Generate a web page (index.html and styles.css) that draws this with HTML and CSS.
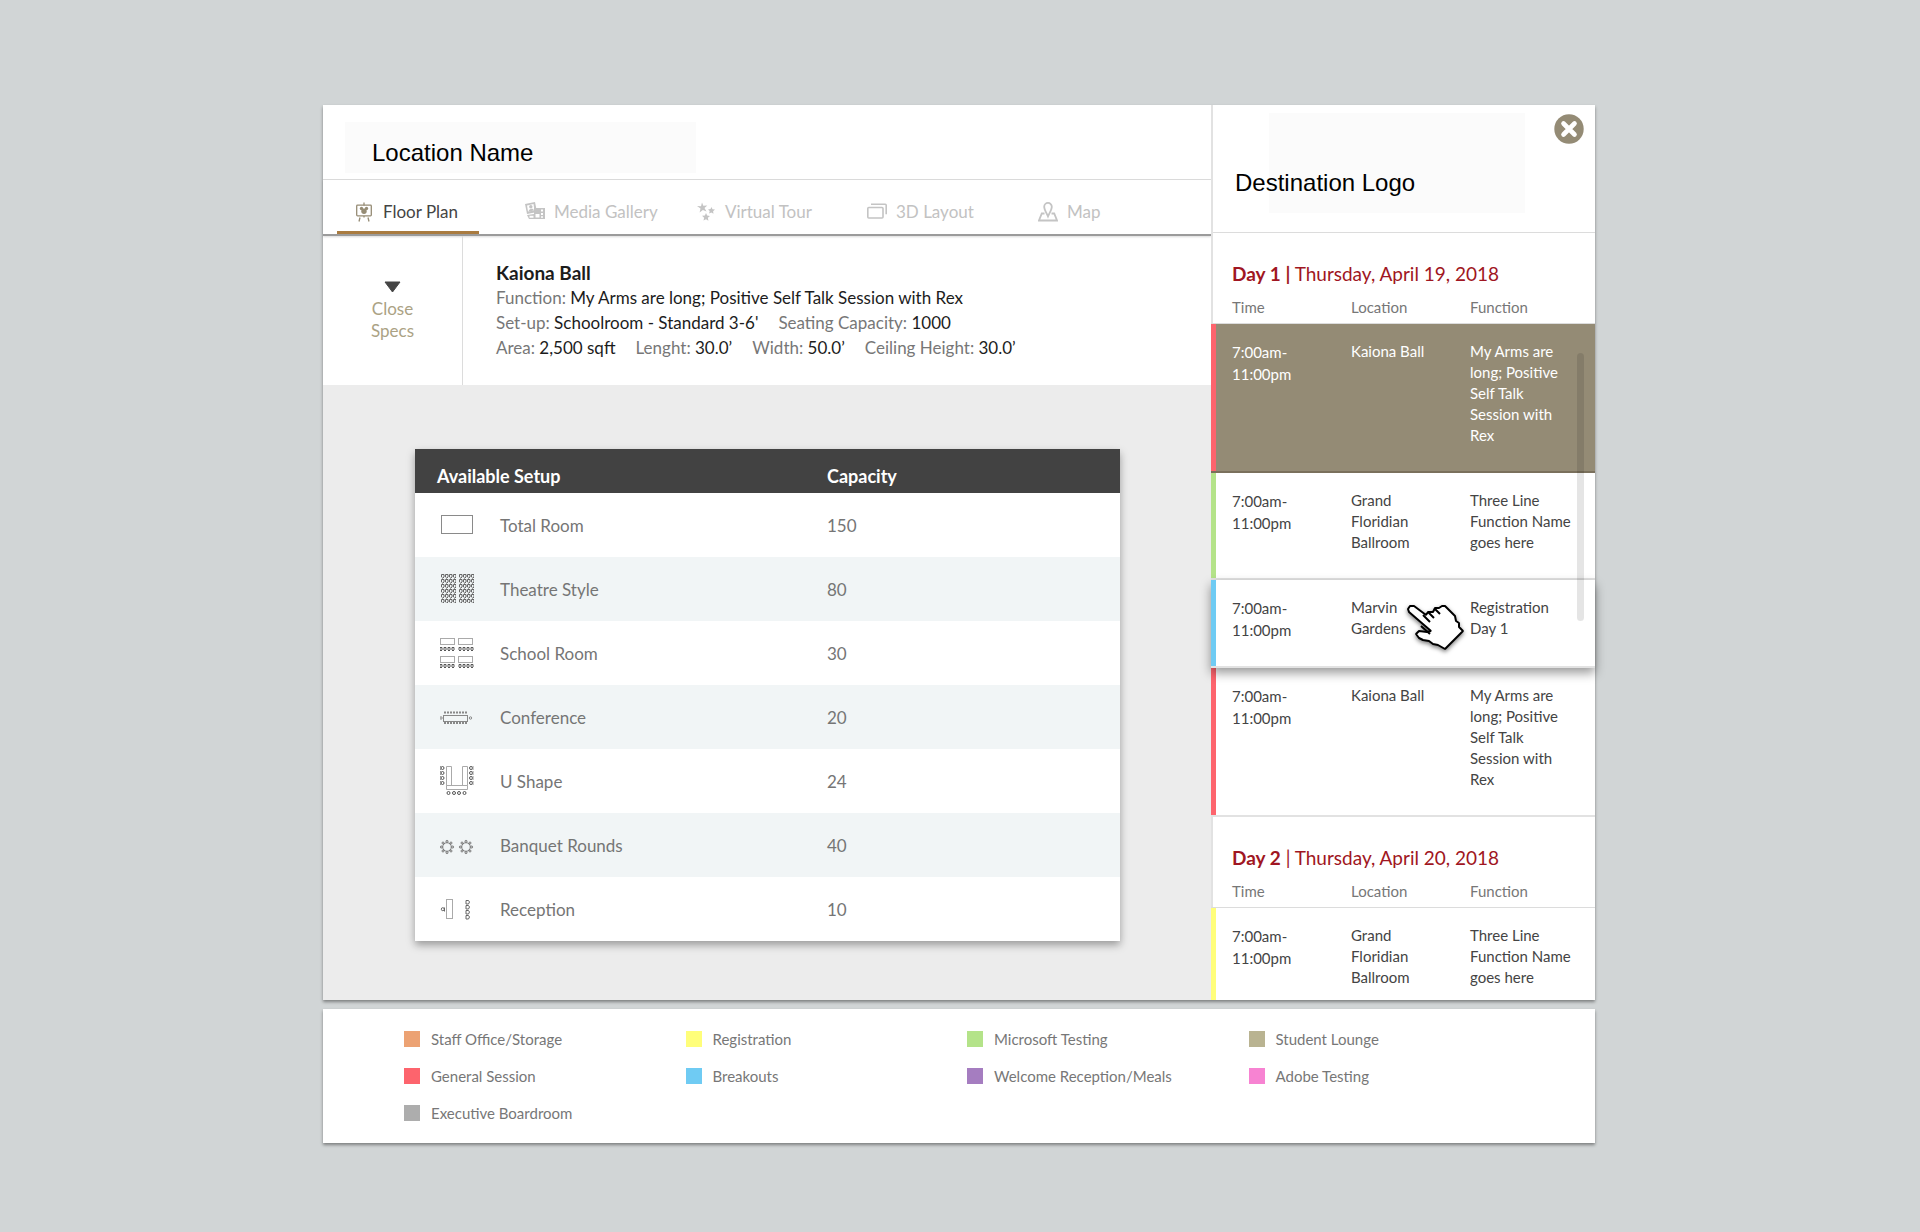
FILE: index.html
```html
<!DOCTYPE html>
<html lang="en">
<head>
  <meta charset="UTF-8">
  <meta name="viewport" content="width=device-width, initial-scale=1.0">
  <title>Floor Plan</title>
  <link rel="stylesheet" href="styles.css">
</head>
<body>
  <!-- shared seat shapes -->
  <svg class="defs" aria-hidden="true">
    <defs>
      <pattern id="seats" width="4" height="5" patternUnits="userSpaceOnUse">
        <path d="M0.500 0.500h2.500v2.500l-1.200 1.200-1.300-1.200z" fill="none" stroke="#666"/>
        <path d="M3 2h1M1.500 4v1" stroke="#999"/>
      </pattern>
      <g id="seat-row" fill="none" stroke="#555" stroke-width="1">
        <path d="M1 0.5h2v2.5l-1 1-1-1zM5 0.5h2v2.5l-1 1-1-1zM9 0.5h2v2.5l-1 1-1-1zM13 0.5h2v2.5l-1 1-1-1z"/>
      </g>
      <g id="round-seats" fill="none" stroke="#777" stroke-width="1">
        <circle cx="7" cy="7" r="4.300"/>
        <circle cx="7" cy="1.300" r="1"/><circle cx="7" cy="12.700" r="1"/>
        <circle cx="1.300" cy="7" r="1"/><circle cx="12.700" cy="7" r="1"/>
        <circle cx="3" cy="3" r="1"/><circle cx="11" cy="3" r="1"/>
        <circle cx="3" cy="11" r="1"/><circle cx="11" cy="11" r="1"/>
      </g>
    </defs>
  </svg>

  <div class="app">
    <main class="main">
      <header class="location">
        <h1 class="location-name">Location Name</h1>
      </header>

      <!-- tabs -->
      <nav class="tabs">
        <a class="tab active" href="#floor-plan">
          <svg width="20" height="20" viewBox="0 0 20 20" fill="none" stroke="#968c75" stroke-width="1.3">
            <rect x="2.7" y="3.2" width="14.6" height="10.6" rx="0.8"/>
            <path d="M10 0.5v3M6 15.5l-1 4M14 15.5l1 4M10 14v1.500"/>
            <g fill="#968c75" stroke="none"><circle cx="10" cy="9.300" r="2.700"/><circle cx="7.500" cy="6.500" r="1.700"/><circle cx="12.500" cy="6.500" r="1.700"/></g>
          </svg>
          Floor Plan
        </a>
        <a class="tab" href="#media">
          <svg width="20" height="20" viewBox="0 0 20 20">
            <path fill="#c4c4c4" fill-rule="evenodd" d="M0 2l10-2 2 10-10 2zM2 3.500l1 6 6.500-1-1-6.500z"/>
            <circle cx="5.800" cy="4.800" r="1.700" fill="#c4c4c4"/><path fill="#c4c4c4" d="M3.500 9.500c0-3 5-4 5.500-1z"/>
            <path fill="#c4c4c4" fill-rule="evenodd" d="M2 13l7-1V6h11v11H4zM4.500 13.800v2h4v-2zM10.500 12v3.500h4V12zM16 7.500v2h2v-2zM16 11v2h2v-2zM16 14.300v1.500h2v-1.500z"/>
          </svg>
          Media Gallery
        </a>
        <a class="tab" href="#tour">
          <svg width="20" height="20" viewBox="0 0 20 20" fill="#c4c4c4">
            <path d="M6 0.500l1.300 3.300 4-.3-2.800 2.500 2 3.500-3.600-1.500-3.300 2.400.9-3.900L1 4l4 .2z"/>
            <path d="M15.500 5l1 2.200 2.500.3-1.900 1.700.4 2.500-2.200-1.300-2.200 1.100.6-2.400-1.700-1.700 2.500-.3z"/>
            <path d="M10 11l1.200 2.600 2.800.3-2.100 1.900.5 2.900-2.400-1.500-2.500 1.400.6-2.800-2.100-2 2.900-.3z"/>
          </svg>
          Virtual Tour
        </a>
        <a class="tab" href="#layout">
          <svg width="20" height="20" viewBox="0 0 20 20" fill="none" stroke="#c4c4c4" stroke-width="1.6">
            <rect x="0.800" y="5.500" width="15.200" height="10.500" rx="1"/><path d="M4 2.300h14.200q1 0 1 1v9"/>
          </svg>
          3D Layout
        </a>
        <a class="tab" href="#map">
          <svg width="20" height="20" viewBox="0 0 20 20" fill="none" stroke="#c4c4c4" stroke-width="1.8">
            <path d="M10 14.500C8.500 11 6.200 7.500 6.200 4.700a3.800 3.800 0 0 1 7.600 0C13.800 7.500 11.500 11 10 14.500z"/>
            <path d="M6.500 11.500H3.800L1 18.500h18l-2.800-7h-2.700"/>
          </svg>
          Map
        </a>
      </nav>

      <!-- room specs -->
      <section class="specs">
        <button class="close-specs" type="button">
          <svg width="17" height="12" viewBox="0 0 17 12"><path d="M1 1h15L8.500 11z" fill="#444" stroke="#444" stroke-linejoin="round"/></svg>
          <span>Close<br>Specs</span>
        </button>
        <div class="spec-info">
          <h2>Kaiona Ball</h2>
          <p><span>Function: <b>My Arms are long; Positive Self Talk Session with Rex</b></span></p>
          <p><span>Set-up: <b>Schoolroom - Standard 3-6'</b></span><span>Seating Capacity: <b>1000</b></span></p>
          <p><span>Area: <b>2,500 sqft</b></span><span>Lenght: <b>30.0’</b></span><span>Width: <b>50.0’</b></span><span>Ceiling Height: <b>30.0’</b></span></p>
        </div>
      </section>

      <section class="plan">
        <table class="setup">
          <thead>
            <tr><th colspan="2" scope="col">Available Setup</th><th scope="col">Capacity</th></tr>
          </thead>
          <tbody>
            <tr>
              <td class="icon"><svg width="34" height="32" viewBox="0 0 34 32"><rect x="1.500" y="6.500" width="31" height="18" fill="none" stroke="#8a8a8a"/></svg></td>
              <td>Total Room</td><td>150</td>
            </tr>
            <tr>
              <td class="icon"><svg width="34" height="32" viewBox="0 0 34 32"><svg x="1" y="1" width="15" height="29"><rect width="15" height="29" fill="url(#seats)"/></svg><svg x="19" y="1" width="15" height="29"><rect width="15" height="29" fill="url(#seats)"/></svg></svg></td>
              <td>Theatre Style</td><td>80</td>
            </tr>
            <tr>
              <td class="icon"><svg width="34" height="32" viewBox="0 0 34 32">
                <g fill="none" stroke="#aaa"><rect x="0.500" y="1.500" width="14" height="6"/><rect x="18.500" y="1.500" width="14" height="6"/><rect x="0.500" y="19.500" width="14" height="6"/><rect x="18.500" y="19.500" width="14" height="6"/></g>
                <use href="#seat-row" x="-1" y="10"/><use href="#seat-row" x="18" y="10"/><use href="#seat-row" x="-1" y="27"/><use href="#seat-row" x="18" y="27"/>
              </svg></td>
              <td>School Room</td><td>30</td>
            </tr>
            <tr>
              <td class="icon"><svg width="34" height="32" viewBox="0 0 34 32" fill="none" stroke="#888">
                <rect x="3.500" y="14.500" width="24" height="6"/>
                <path d="M4 11.500h24M4 22h24" stroke-width="2" stroke-dasharray="2 1"/>
                <circle cx="1" cy="17" r="1.200"/><circle cx="30.500" cy="17" r="1.200"/>
              </svg></td>
              <td>Conference</td><td>20</td>
            </tr>
            <tr>
              <td class="icon"><svg width="34" height="32" viewBox="0 0 34 32" fill="none">
                <path stroke="#aaa" d="M6.500 1.500h5v19h-5zM22.500 1.500h5v19h-5zM6.500 20.500h21v4h-21z"/>
                <g stroke="#555"><circle cx="2.500" cy="3" r="1.500"/><circle cx="2.500" cy="8" r="1.500"/><circle cx="2.500" cy="13" r="1.500"/><circle cx="2.500" cy="18" r="1.500"/>
                <circle cx="31" cy="3" r="1.500"/><circle cx="31" cy="8" r="1.500"/><circle cx="31" cy="13" r="1.500"/><circle cx="31" cy="18" r="1.500"/>
                <circle cx="8.500" cy="28" r="1.500"/><circle cx="14" cy="28" r="1.500"/><circle cx="19" cy="28" r="1.500"/><circle cx="24.500" cy="28" r="1.500"/>
                <path d="M0.500 1v4M0.500 6v4M0.500 11v4M0.500 16v4M33 1v4M33 6v4M33 11v4M33 16v4" stroke="#999"/></g>
              </svg></td>
              <td>U Shape</td><td>24</td>
            </tr>
            <tr>
              <td class="icon"><svg width="34" height="32" viewBox="0 0 34 32"><use href="#round-seats" x="0" y="11"/><use href="#round-seats" x="19" y="11"/></svg></td>
              <td>Banquet Rounds</td><td>40</td>
            </tr>
            <tr>
              <td class="icon"><svg width="34" height="32" viewBox="0 0 34 32" fill="none">
                <rect x="6.500" y="6.500" width="6" height="19" stroke="#aaa"/>
                <g stroke="#666"><path d="M4.500 14.500v4"/><circle cx="2.800" cy="16.200" r="1.500"/>
                <path d="M26 7.500h2.500l1 1.500-1 2H26zM26 12.500h2.500l1 1.500-1 2H26zM26 17.500h2.500l1 1.500-1 2H26zM26 22.500h2.500l1 1.500-1 2H26z"/></g>
              </svg></td>
              <td>Reception</td><td>10</td>
            </tr>
          </tbody>
        </table>
      </section>
    </main>

    <!-- schedule -->
    <aside class="schedule">
      <header class="destination">
        <div class="logo">Destination Logo</div>
        <button class="close" type="button" aria-label="Close">
          <svg width="30" height="30" viewBox="0 0 30 30"><circle cx="15" cy="15" r="14.700" fill="#948b75"/><path d="M9.500 9.500l11 11M20.500 9.500l-11 11" stroke="#fff" stroke-width="4.600" stroke-linecap="round"/></svg>
        </button>
      </header>

      <div class="days">
        <h3><b>Day 1 |</b> Thursday, April 19, 2018</h3>
        <table class="day">
          <thead>
            <tr><th scope="col">Time</th><th scope="col">Location</th><th scope="col">Function</th></tr>
          </thead>
          <tbody>
            <tr class="general selected">
              <td>7:00am-<br>11:00pm</td><td>Kaiona Ball</td><td>My Arms are long; Positive Self Talk Session with Rex</td>
            </tr>
            <tr class="testing">
              <td>7:00am-<br>11:00pm</td><td>Grand Floridian Ballroom</td><td>Three Line Function Name goes here</td>
            </tr>
            <tr class="breakout raised">
              <td>7:00am-<br>11:00pm</td>
              <td>Marvin Gardens
                <svg class="cursor" width="60" height="50" viewBox="0 0 60 50">
                  <path d="M2 5l2-3h4l12 9 2-3h5l2-4h4l3-2h3l10 10 1 5 3 2v4l4 4-18 18-7-4-5-1-4-3-6-1-4-2-3-4 3-3 8 1 4-1L3 8z" fill="#fff" stroke="#000" stroke-width="2" stroke-linejoin="bevel"/>
                  <path d="M17 11l7 7M22 8l6 6M29 5l5 5M15 22l9 8" fill="none" stroke="#000" stroke-width="2"/>
                </svg>
              </td>
              <td>Registration Day 1</td>
            </tr>
            <tr class="general">
              <td>7:00am-<br>11:00pm</td><td>Kaiona Ball</td><td>My Arms are long; Positive Self Talk Session with Rex</td>
            </tr>
          </tbody>
        </table>

        <h3><b>Day 2</b> | Thursday, April 20, 2018</h3>
        <table class="day">
          <thead>
            <tr><th scope="col">Time</th><th scope="col">Location</th><th scope="col">Function</th></tr>
          </thead>
          <tbody>
            <tr class="registration">
              <td>7:00am-<br>11:00pm</td><td>Grand Floridian Ballroom</td><td>Three Line Function Name goes here</td>
            </tr>
          </tbody>
        </table>
        <div class="scroll-thumb"></div>
      </div>
    </aside>
  </div>

  <!-- legend -->
  <ul class="legend">
    <li class="staff">Staff Office/Storage</li>
    <li class="registration">Registration</li>
    <li class="testing">Microsoft Testing</li>
    <li class="lounge">Student Lounge</li>
    <li class="general">General Session</li>
    <li class="breakout">Breakouts</li>
    <li class="welcome">Welcome Reception/Meals</li>
    <li class="adobe">Adobe Testing</li>
    <li class="board">Executive Boardroom</li>
  </ul>
</body>
</html>
```
FILE: styles.css
```css
* {
  box-sizing: border-box;
}

body {
  margin: 0;
  padding: 105px 26px 86px 24px;
  background-color: #d1d5d6;
  color: #444;
  font-family: Lato, sans-serif;
  font-size: 16px;
}

h1, h2, h3, p, ul {
  margin: 0;
  padding: 0;
}

button {
  border: none;
  background: none;
  padding: 0;
  font: inherit;
  cursor: pointer;
}

.defs {
  position: absolute;
  width: 0;
  height: 0;
}

/* event colours */
.staff { --bar: #eca273; }
.registration { --bar: #fffe7a; }
.testing { --bar: #b4e389; }
.lounge { --bar: #b9b391; }
.general { --bar: #fd646d; }
.breakout { --bar: #6fcbf3; }
.welcome { --bar: #a57dc0; }
.adobe { --bar: #f783d2; }
.board { --bar: #adadad; }

.app,
.legend {
  max-width: 1272px;
  margin: 0 auto;
  background-color: #fff;
  box-shadow: 0 2px 3px rgba(0, 0, 0, 0.4);
}

.app {
  display: grid;
  grid-template-columns: 1fr 384px;
}

/* left side */
.main {
  display: flex;
  flex-direction: column;
}

.location {
  padding: 17px 22px 6px;
  border-bottom: 1px solid #dcdcdc;
}

.location-name {
  max-width: 351px;
  padding: 17px 27px 6px;
  background-color: #fbfbfb;
  color: #000;
  font-family: "Liberation Sans", Arial, sans-serif;
  font-size: 24px;
  font-weight: normal;
  line-height: 28px;
}

.tabs {
  display: flex;
  gap: 29px;
  padding: 0 14px;
  border-bottom: 2px solid #9b9b9b;
  box-shadow: 0 1px 2px rgba(0, 0, 0, 0.15);
}

.tab {
  display: flex;
  align-items: center;
  gap: 9px;
  width: 142px;
  height: 54px;
  padding: 12px 0 0 17px;
  border-bottom: 3px solid transparent;
  color: #c2c2c2;
  font-size: 17px;
  text-decoration: none;
  white-space: nowrap;
}

.tab svg {
  flex-shrink: 0;
}

.tab.active {
  border-color: #a97b40;
  color: #444;
}

.specs {
  display: flex;
}

.close-specs {
  display: flex;
  flex-direction: column;
  align-items: center;
  width: 140px;
  padding: 45px 0 43px;
  border-right: 1px solid #dcdcdc;
  color: #aba284;
  font-size: 17px;
  line-height: 22px;
}

.close-specs span {
  margin-top: 5px;
}

.spec-info {
  padding: 25px 33px;
  color: #777;
  font-size: 17px;
  line-height: 25px;
}

.spec-info h2 {
  color: #1c1c1c;
  font-size: 19px;
  line-height: 24px;
}

.spec-info p {
  display: flex;
  flex-wrap: wrap;
  column-gap: 20px;
}

.spec-info b {
  color: #1c1c1c;
  font-weight: normal;
}

.plan {
  flex: 1;
  padding: 64px 91px 56px 92px;
  background-color: #ececec;
}

.setup {
  width: 100%;
  border-collapse: collapse;
  background-color: #fff;
  box-shadow: 0 4px 8px rgba(0, 0, 0, 0.35);
  color: #757575;
  font-size: 17px;
}

.setup th {
  height: 44px;
  padding: 10px 0 0;
  background-color: #424242;
  color: #fff;
  font-size: 18px;
  text-align: left;
}

.setup th:first-child {
  padding-left: 22px;
}

.setup th:last-child {
  width: 293px;
}

.setup td {
  height: 64px;
  padding: 0;
}

.setup .icon {
  width: 85px;
  padding-left: 25px;
}

.setup svg {
  display: block;
}

.setup tbody tr:nth-child(even) {
  background-color: #f1f5f6;
}

/* right side */
.schedule {
  border-left: 2px solid #e2e2e2;
}

.destination {
  position: relative;
  padding: 8px 70px 19px 56px;
  border-bottom: 1px solid #dcdcdc;
}

.logo {
  height: 100px;
  padding-top: 56px;
  background-color: #fbfbfb;
  color: #000;
  font-family: "Liberation Sans", Arial, sans-serif;
  font-size: 24px;
  line-height: 28px;
  text-indent: -34px;
  white-space: nowrap;
}

.close {
  position: absolute;
  top: 9px;
  right: 11px;
  height: 30px;
}

.days {
  position: relative;
}

.days h3 {
  padding: 29px 0 0 19px;
  color: #a01622;
  font-size: 19px;
  font-weight: normal;
  line-height: 24px;
}

.day {
  width: calc(100% + 2px);
  margin-left: -2px;
  border-spacing: 0;
  table-layout: fixed;
  font-size: 15px;
  line-height: 21px;
}

.day th {
  height: 38px;
  padding: 6px 0 0;
  border-bottom: 1px solid #dcdcdc;
  color: #777;
  font-weight: normal;
  text-align: left;
}

.day th:first-child {
  width: 140px;
  padding-left: 21px;
}

.day th:nth-child(2) {
  width: 119px;
}

.day td {
  padding: 17px 21px 25px 0;
  border-bottom: 2px solid #e2e2e2;
  vertical-align: top;
}

.day td:first-child {
  padding-left: 21px;
  box-shadow: inset 5px 0 var(--bar);
  line-height: 22px;
}

.day .selected td {
  background-color: #948b75;
  border-color: #7a705c;
  color: #fff;
}

.day .raised {
  position: relative;
  background-color: #fff;
  box-shadow: 0 5px 10px rgba(0, 0, 0, 0.4);
}

.day .registration td {
  padding-bottom: 12px;
  border-bottom: none;
}

.cursor {
  position: absolute;
  top: 24px;
  left: 195px;
  filter: drop-shadow(0 2px 2px rgba(0, 0, 0, 0.5));
}

.scroll-thumb {
  position: absolute;
  top: 120px;
  right: 11px;
  width: 7px;
  height: 268px;
  border-radius: 4px;
  background-color: rgba(0, 0, 0, 0.1);
}

/* bottom legend */
.legend {
  display: grid;
  grid-template-columns: repeat(4, 1fr);
  row-gap: 15px;
  margin-top: 9px;
  padding: 19px 65px 19px 81px;
  color: #777;
  font-size: 15px;
  line-height: 22px;
  list-style: none;
}

.legend li {
  display: flex;
  align-items: center;
  gap: 11px;
}

.legend li::before {
  content: "";
  width: 16px;
  height: 16px;
  background-color: var(--bar);
}
```
